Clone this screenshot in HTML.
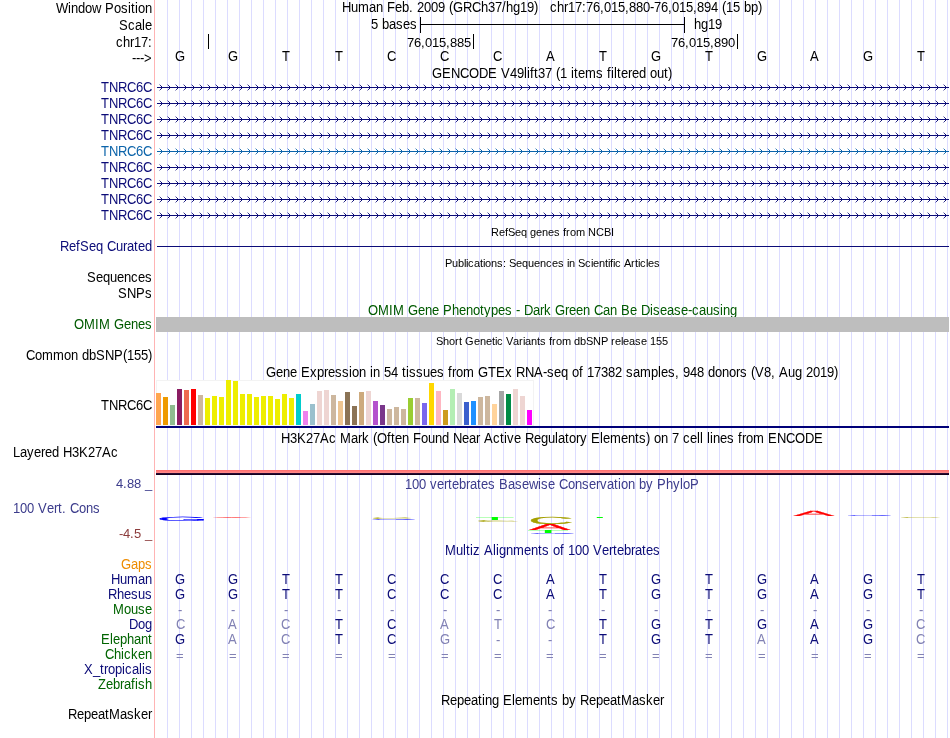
<!DOCTYPE html>
<html><head><meta charset="utf-8"><title>UCSC Genome Browser chr17:76,015,880-76,015,894</title>
<style>
html,body{margin:0;padding:0;background:#fff;}
body{width:950px;height:738px;overflow:hidden;}
svg{display:block;will-change:transform;font-family:"Liberation Sans",Arial,Helvetica,sans-serif;}
svg text{white-space:pre;}
.crisp{shape-rendering:crispEdges;}
</style></head><body>
<svg xml:space="preserve" width="950" height="738" viewBox="0 0 950 738">
<rect width="950" height="738" fill="#fff"/>
<defs>
<pattern id="chev0" patternUnits="userSpaceOnUse" x="157" y="79" width="8" height="16" shape-rendering="crispEdges"><g fill="#0c0c78"><rect x="4" y="7" width="1" height="1"/><rect x="4" y="9" width="1" height="1"/><rect x="3" y="6" width="1" height="1" opacity="0.85"/><rect x="3" y="10" width="1" height="1" opacity="0.85"/><rect x="2" y="5" width="1" height="1" opacity="0.35"/><rect x="2" y="11" width="1" height="1" opacity="0.35"/></g></pattern>
<pattern id="chev1" patternUnits="userSpaceOnUse" x="157" y="79" width="8" height="16" shape-rendering="crispEdges"><g fill="#0c64aa"><rect x="4" y="7" width="1" height="1"/><rect x="4" y="9" width="1" height="1"/><rect x="3" y="6" width="1" height="1" opacity="0.85"/><rect x="3" y="10" width="1" height="1" opacity="0.85"/><rect x="2" y="5" width="1" height="1" opacity="0.35"/><rect x="2" y="11" width="1" height="1" opacity="0.35"/></g></pattern>
</defs>
<g class="crisp">
<rect x="167" y="0" width="1" height="738" fill="#dcdcff"/>
<rect x="179" y="0" width="1" height="738" fill="#dcdcff"/>
<rect x="191" y="0" width="1" height="738" fill="#dcdcff"/>
<rect x="203" y="0" width="1" height="738" fill="#dcdcff"/>
<rect x="215" y="0" width="1" height="738" fill="#dcdcff"/>
<rect x="227" y="0" width="1" height="738" fill="#dcdcff"/>
<rect x="239" y="0" width="1" height="738" fill="#dcdcff"/>
<rect x="251" y="0" width="1" height="738" fill="#dcdcff"/>
<rect x="263" y="0" width="1" height="738" fill="#dcdcff"/>
<rect x="275" y="0" width="1" height="738" fill="#dcdcff"/>
<rect x="287" y="0" width="1" height="738" fill="#dcdcff"/>
<rect x="299" y="0" width="1" height="738" fill="#dcdcff"/>
<rect x="311" y="0" width="1" height="738" fill="#dcdcff"/>
<rect x="323" y="0" width="1" height="738" fill="#dcdcff"/>
<rect x="335" y="0" width="1" height="738" fill="#dcdcff"/>
<rect x="347" y="0" width="1" height="738" fill="#dcdcff"/>
<rect x="359" y="0" width="1" height="738" fill="#dcdcff"/>
<rect x="371" y="0" width="1" height="738" fill="#dcdcff"/>
<rect x="383" y="0" width="1" height="738" fill="#dcdcff"/>
<rect x="395" y="0" width="1" height="738" fill="#dcdcff"/>
<rect x="407" y="0" width="1" height="738" fill="#dcdcff"/>
<rect x="419" y="0" width="1" height="738" fill="#dcdcff"/>
<rect x="431" y="0" width="1" height="738" fill="#dcdcff"/>
<rect x="443" y="0" width="1" height="738" fill="#dcdcff"/>
<rect x="455" y="0" width="1" height="738" fill="#dcdcff"/>
<rect x="467" y="0" width="1" height="738" fill="#dcdcff"/>
<rect x="479" y="0" width="1" height="738" fill="#dcdcff"/>
<rect x="491" y="0" width="1" height="738" fill="#dcdcff"/>
<rect x="503" y="0" width="1" height="738" fill="#dcdcff"/>
<rect x="515" y="0" width="1" height="738" fill="#dcdcff"/>
<rect x="527" y="0" width="1" height="738" fill="#dcdcff"/>
<rect x="539" y="0" width="1" height="738" fill="#dcdcff"/>
<rect x="551" y="0" width="1" height="738" fill="#dcdcff"/>
<rect x="563" y="0" width="1" height="738" fill="#dcdcff"/>
<rect x="575" y="0" width="1" height="738" fill="#dcdcff"/>
<rect x="587" y="0" width="1" height="738" fill="#dcdcff"/>
<rect x="599" y="0" width="1" height="738" fill="#dcdcff"/>
<rect x="611" y="0" width="1" height="738" fill="#dcdcff"/>
<rect x="623" y="0" width="1" height="738" fill="#dcdcff"/>
<rect x="635" y="0" width="1" height="738" fill="#dcdcff"/>
<rect x="647" y="0" width="1" height="738" fill="#dcdcff"/>
<rect x="659" y="0" width="1" height="738" fill="#dcdcff"/>
<rect x="671" y="0" width="1" height="738" fill="#dcdcff"/>
<rect x="683" y="0" width="1" height="738" fill="#dcdcff"/>
<rect x="695" y="0" width="1" height="738" fill="#dcdcff"/>
<rect x="707" y="0" width="1" height="738" fill="#dcdcff"/>
<rect x="719" y="0" width="1" height="738" fill="#dcdcff"/>
<rect x="731" y="0" width="1" height="738" fill="#dcdcff"/>
<rect x="743" y="0" width="1" height="738" fill="#dcdcff"/>
<rect x="755" y="0" width="1" height="738" fill="#dcdcff"/>
<rect x="767" y="0" width="1" height="738" fill="#dcdcff"/>
<rect x="779" y="0" width="1" height="738" fill="#dcdcff"/>
<rect x="791" y="0" width="1" height="738" fill="#dcdcff"/>
<rect x="803" y="0" width="1" height="738" fill="#dcdcff"/>
<rect x="815" y="0" width="1" height="738" fill="#dcdcff"/>
<rect x="827" y="0" width="1" height="738" fill="#dcdcff"/>
<rect x="839" y="0" width="1" height="738" fill="#dcdcff"/>
<rect x="851" y="0" width="1" height="738" fill="#dcdcff"/>
<rect x="863" y="0" width="1" height="738" fill="#dcdcff"/>
<rect x="875" y="0" width="1" height="738" fill="#dcdcff"/>
<rect x="887" y="0" width="1" height="738" fill="#dcdcff"/>
<rect x="899" y="0" width="1" height="738" fill="#dcdcff"/>
<rect x="911" y="0" width="1" height="738" fill="#dcdcff"/>
<rect x="923" y="0" width="1" height="738" fill="#dcdcff"/>
<rect x="935" y="0" width="1" height="738" fill="#dcdcff"/>
<rect x="947" y="0" width="1" height="738" fill="#dcdcff"/>
<rect x="154" y="0" width="1" height="738" fill="#ffb4b4"/>
</g>
<text x="56 68 71 78 85 92 101 105 114 121 128 131 135 138 145" y="13" fill="#000" font-size="13" transform="matrix(1 0 0 1.07 0 -0.91)">Window Position</text>
<text x="342 351 358 369 376 383 387 395 402 409 413 417 424 431 438 445 449 453 463 472 481 488 495 502 506 513 520 527 534 538 542 546 550 557 564 568 575 582 586 593 600 604 611 618 625 629 636 643 650 654 661 668 672 679 686 693 697 704 711 718 722 726 733 740 744 751 758" y="12" fill="#000" font-size="13" transform="matrix(1 0 0 1.07 0 -0.84)">Human Feb. 2009 (GRCh37/hg19)   chr17:76,015,880-76,015,894 (15 bp)</text>
<text x="119 128 135 142 145" y="30" fill="#000" font-size="13" transform="matrix(1 0 0 1.07 0 -2.1)">Scale</text>
<text x="371 378 382 389 396 403 410" y="29" fill="#000" font-size="13" transform="matrix(1 0 0 1.07 0 -2.03)">5 bases</text>
<g class="crisp">
<rect x="420" y="24" width="265" height="1" fill="#000"/>
<rect x="420" y="17" width="1" height="16" fill="#000"/>
<rect x="684" y="17" width="1" height="16" fill="#000"/>
<rect x="208" y="34" width="1" height="15" fill="#000"/>
<rect x="473" y="34" width="1" height="15" fill="#000"/>
<rect x="737" y="34" width="1" height="15" fill="#000"/>
</g>
<text x="694 701 708 715" y="29" fill="#000" font-size="13" transform="matrix(1 0 0 1.07 0 -2.03)">hg19</text>
<text x="116 123 130 134 141 148" y="47" fill="#000" font-size="13" transform="matrix(1 0 0 1.07 0 -3.29)">chr17:</text>
<text x="407 414 421 425 432 439 446 450 457 464" y="47" fill="#000" font-size="13">76,015,885</text>
<text x="671 678 685 689 696 703 710 714 721 728" y="47" fill="#000" font-size="13">76,015,890</text>
<text x="132 136 140 144" y="63" fill="#000" font-size="13" transform="matrix(1 0 0 1.07 0 -4.41)">---&gt;</text>
<text x="175" y="61" fill="#000" font-size="13" transform="matrix(1 0 0 1.07 0 -4.27)">G</text>
<text x="228" y="61" fill="#000" font-size="13" transform="matrix(1 0 0 1.07 0 -4.27)">G</text>
<text x="282" y="61" fill="#000" font-size="13" transform="matrix(1 0 0 1.07 0 -4.27)">T</text>
<text x="335" y="61" fill="#000" font-size="13" transform="matrix(1 0 0 1.07 0 -4.27)">T</text>
<text x="387" y="61" fill="#000" font-size="13" transform="matrix(1 0 0 1.07 0 -4.27)">C</text>
<text x="440" y="61" fill="#000" font-size="13" transform="matrix(1 0 0 1.07 0 -4.27)">C</text>
<text x="493" y="61" fill="#000" font-size="13" transform="matrix(1 0 0 1.07 0 -4.27)">C</text>
<text x="546" y="61" fill="#000" font-size="13" transform="matrix(1 0 0 1.07 0 -4.27)">A</text>
<text x="599" y="61" fill="#000" font-size="13" transform="matrix(1 0 0 1.07 0 -4.27)">T</text>
<text x="651" y="61" fill="#000" font-size="13" transform="matrix(1 0 0 1.07 0 -4.27)">G</text>
<text x="705" y="61" fill="#000" font-size="13" transform="matrix(1 0 0 1.07 0 -4.27)">T</text>
<text x="757" y="61" fill="#000" font-size="13" transform="matrix(1 0 0 1.07 0 -4.27)">G</text>
<text x="810" y="61" fill="#000" font-size="13" transform="matrix(1 0 0 1.07 0 -4.27)">A</text>
<text x="863" y="61" fill="#000" font-size="13" transform="matrix(1 0 0 1.07 0 -4.27)">G</text>
<text x="917" y="61" fill="#000" font-size="13" transform="matrix(1 0 0 1.07 0 -4.27)">T</text>
<text x="432 442 451 460 469 479 488 497 501 510 517 524 527 530 534 538 545 552 556 560 567 571 574 578 585 596 603 607 611 614 617 621 628 632 639 646 650 657 664 668" y="78" fill="#000" font-size="13" transform="matrix(1 0 0 1.07 0 -5.46)">GENCODE V49lift37 (1 items filtered out)</text>
<text x="101 109 118 127 136 143" y="92" fill="#0c0c78" font-size="13" transform="matrix(1 0 0 1.07 0 -6.44)">TNRC6C</text>
<rect class="crisp" x="157" y="87" width="792" height="1" fill="#0c0c78"/>
<rect x="157" y="79" width="792" height="16" fill="url(#chev0)"/>
<text x="101 109 118 127 136 143" y="108" fill="#0c0c78" font-size="13" transform="matrix(1 0 0 1.07 0 -7.56)">TNRC6C</text>
<rect class="crisp" x="157" y="103" width="792" height="1" fill="#0c0c78"/>
<rect x="157" y="95" width="792" height="16" fill="url(#chev0)"/>
<text x="101 109 118 127 136 143" y="124" fill="#0c0c78" font-size="13" transform="matrix(1 0 0 1.07 0 -8.68)">TNRC6C</text>
<rect class="crisp" x="157" y="119" width="792" height="1" fill="#0c0c78"/>
<rect x="157" y="111" width="792" height="16" fill="url(#chev0)"/>
<text x="101 109 118 127 136 143" y="140" fill="#0c0c78" font-size="13" transform="matrix(1 0 0 1.07 0 -9.8)">TNRC6C</text>
<rect class="crisp" x="157" y="135" width="792" height="1" fill="#0c0c78"/>
<rect x="157" y="127" width="792" height="16" fill="url(#chev0)"/>
<text x="101 109 118 127 136 143" y="156" fill="#0c64aa" font-size="13" transform="matrix(1 0 0 1.07 0 -10.92)">TNRC6C</text>
<rect class="crisp" x="157" y="151" width="792" height="1" fill="#0c64aa"/>
<rect x="157" y="143" width="792" height="16" fill="url(#chev1)"/>
<text x="101 109 118 127 136 143" y="172" fill="#0c0c78" font-size="13" transform="matrix(1 0 0 1.07 0 -12.04)">TNRC6C</text>
<rect class="crisp" x="157" y="167" width="792" height="1" fill="#0c0c78"/>
<rect x="157" y="159" width="792" height="16" fill="url(#chev0)"/>
<text x="101 109 118 127 136 143" y="188" fill="#0c0c78" font-size="13" transform="matrix(1 0 0 1.07 0 -13.16)">TNRC6C</text>
<rect class="crisp" x="157" y="183" width="792" height="1" fill="#0c0c78"/>
<rect x="157" y="175" width="792" height="16" fill="url(#chev0)"/>
<text x="101 109 118 127 136 143" y="204" fill="#0c0c78" font-size="13" transform="matrix(1 0 0 1.07 0 -14.28)">TNRC6C</text>
<rect class="crisp" x="157" y="199" width="792" height="1" fill="#0c0c78"/>
<rect x="157" y="191" width="792" height="16" fill="url(#chev0)"/>
<text x="101 109 118 127 136 143" y="220" fill="#0c0c78" font-size="13" transform="matrix(1 0 0 1.07 0 -15.4)">TNRC6C</text>
<rect class="crisp" x="157" y="215" width="792" height="1" fill="#0c0c78"/>
<rect x="157" y="207" width="792" height="16" fill="url(#chev0)"/>
<text x="491 499 505 508 515 521 527 530 536 542 548 554 560 563 566 570 576 585 588 596 604 611" y="236" fill="#000" font-size="11" transform="matrix(1 0 0 1.07 0 -16.52)">RefSeq genes from NCBI</text>
<text x="60 69 76 80 89 96 103 107 116 123 127 134 138 145" y="251" fill="#0c0c78" font-size="13" transform="matrix(1 0 0 1.07 0 -17.57)">RefSeq Curated</text>
<rect class="crisp" x="157" y="246" width="792" height="1" fill="#0c0c78"/>
<text x="445 452 458 464 466 468 474 480 483 485 491 497 503 506 509 516 522 528 534 540 546 552 558 564 567 569 575 578 585 591 593 599 605 608 610 613 615 621 624 631 635 638 640 646 648 654" y="267" fill="#000" font-size="11" transform="matrix(1 0 0 1.07 0 -18.69)">Publications: Sequences in Scientific Articles</text>
<text x="87 96 103 110 117 124 131 138 145" y="282" fill="#000" font-size="13" transform="matrix(1 0 0 1.07 0 -19.74)">Sequences</text>
<text x="118 127 136 145" y="298" fill="#000" font-size="13" transform="matrix(1 0 0 1.07 0 -20.86)">SNPs</text>
<text x="368 378 389 393 404 408 418 425 432 439 443 452 459 466 473 480 484 491 498 505 512 516 520 524 533 540 544 551 555 565 569 576 583 590 594 603 610 617 621 630 637 641 650 653 660 667 674 681 688 692 699 706 713 720 723 730" y="315" fill="#005a00" font-size="13" transform="matrix(1 0 0 1.07 0 -22.05)">OMIM Gene Phenotypes - Dark Green Can Be Disease-causing</text>
<text x="74 84 95 99 110 114 124 131 138 145" y="329" fill="#005a00" font-size="13" transform="matrix(1 0 0 1.07 0 -23.03)">OMIM Genes</text>
<rect class="crisp" x="156" y="317" width="793" height="15" fill="#bebebe"/>
<text x="436 443 449 455 459 462 465 474 480 486 492 495 497 503 506 513 519 523 525 531 537 540 546 549 552 556 562 571 574 580 586 593 601 608 611 615 621 623 629 635 641 647 650 656 662" y="345" fill="#000" font-size="11" transform="matrix(1 0 0 1.07 0 -24.15)">Short Genetic Variants from dbSNP release 155</text>
<text x="26 35 42 53 64 71 78 82 89 96 105 114 123 127 134 141 148" y="360" fill="#000" font-size="13" transform="matrix(1 0 0 1.07 0 -25.2)">Common dbSNP(155)</text>
<text x="266 276 283 290 297 301 310 317 324 328 335 342 349 352 359 366 370 373 380 384 391 398 402 406 409 416 423 430 437 444 448 452 456 463 474 478 488 496 505 512 516 525 534 543 547 554 561 568 572 579 583 587 594 601 608 615 622 626 633 640 651 658 661 668 675 679 683 690 697 704 708 715 722 729 736 740 747 751 755 764 771 775 779 788 795 802 806 813 820 827 834" y="377" fill="#000" font-size="13" transform="matrix(1 0 0 1.07 0 -26.39)">Gene Expression in 54 tissues from GTEx RNA-seq of 17382 samples, 948 donors (V8, Aug 2019)</text>
<text x="101 109 118 127 136 143" y="410" fill="#000" font-size="13" transform="matrix(1 0 0 1.07 0 -28.7)">TNRC6C</text>
<g class="crisp">
<rect x="156" y="380" width="378" height="46" fill="#f3f3f3"/>
<rect x="157" y="381" width="376" height="44" fill="#fff"/>
<rect x="156" y="393" width="5" height="32" fill="#ffa54f"/>
<rect x="163" y="397" width="5" height="28" fill="#ee9a00"/>
<rect x="170" y="405" width="5" height="20" fill="#8fbc8f"/>
<rect x="177" y="389" width="5" height="36" fill="#8b1c62"/>
<rect x="184" y="390" width="5" height="35" fill="#ee6a50"/>
<rect x="191" y="389" width="5" height="36" fill="#ff0000"/>
<rect x="198" y="395" width="5" height="30" fill="#cdb79e"/>
<rect x="205" y="398" width="5" height="27" fill="#eeee00"/>
<rect x="212" y="396" width="5" height="29" fill="#eeee00"/>
<rect x="219" y="397" width="5" height="28" fill="#eeee00"/>
<rect x="226" y="380" width="5" height="45" fill="#eeee00"/>
<rect x="233" y="381" width="5" height="44" fill="#eeee00"/>
<rect x="240" y="394" width="5" height="31" fill="#eeee00"/>
<rect x="247" y="394" width="5" height="31" fill="#eeee00"/>
<rect x="254" y="397" width="5" height="28" fill="#eeee00"/>
<rect x="261" y="396" width="5" height="29" fill="#eeee00"/>
<rect x="268" y="396" width="5" height="29" fill="#eeee00"/>
<rect x="275" y="399" width="5" height="26" fill="#eeee00"/>
<rect x="282" y="394" width="5" height="31" fill="#eeee00"/>
<rect x="289" y="398" width="5" height="27" fill="#eeee00"/>
<rect x="296" y="394" width="5" height="31" fill="#00cdcd"/>
<rect x="303" y="411" width="5" height="14" fill="#ee82ee"/>
<rect x="310" y="404" width="5" height="21" fill="#9ac0cd"/>
<rect x="317" y="391" width="5" height="34" fill="#eed5d2"/>
<rect x="324" y="390" width="5" height="35" fill="#eed5d2"/>
<rect x="331" y="395" width="5" height="30" fill="#cdb79e"/>
<rect x="338" y="401" width="5" height="24" fill="#eec591"/>
<rect x="345" y="392" width="5" height="33" fill="#8b7355"/>
<rect x="352" y="406" width="5" height="19" fill="#8b7355"/>
<rect x="359" y="392" width="5" height="33" fill="#cdaa7d"/>
<rect x="366" y="391" width="5" height="34" fill="#eed5d2"/>
<rect x="373" y="401" width="5" height="24" fill="#b452cd"/>
<rect x="380" y="405" width="5" height="20" fill="#7a378b"/>
<rect x="387" y="409" width="5" height="16" fill="#cdb79e"/>
<rect x="394" y="407" width="5" height="18" fill="#cdb79e"/>
<rect x="401" y="409" width="5" height="16" fill="#cdb79e"/>
<rect x="408" y="398" width="5" height="27" fill="#9acd32"/>
<rect x="415" y="398" width="5" height="27" fill="#cdb79e"/>
<rect x="422" y="403" width="5" height="22" fill="#7a67ee"/>
<rect x="429" y="383" width="5" height="42" fill="#ffd700"/>
<rect x="436" y="391" width="5" height="34" fill="#ffb6c1"/>
<rect x="443" y="410" width="5" height="15" fill="#cd9b1d"/>
<rect x="450" y="389" width="5" height="36" fill="#b4eeb4"/>
<rect x="457" y="393" width="5" height="32" fill="#d9d9d9"/>
<rect x="464" y="402" width="5" height="23" fill="#3a5fcd"/>
<rect x="471" y="401" width="5" height="24" fill="#1e90ff"/>
<rect x="478" y="397" width="5" height="28" fill="#cdb79e"/>
<rect x="485" y="396" width="5" height="29" fill="#cdb79e"/>
<rect x="492" y="404" width="5" height="21" fill="#ffd39b"/>
<rect x="499" y="391" width="5" height="34" fill="#a6a6a6"/>
<rect x="506" y="394" width="5" height="31" fill="#008b45"/>
<rect x="513" y="389" width="5" height="36" fill="#eed5d2"/>
<rect x="520" y="396" width="5" height="29" fill="#eed5d2"/>
<rect x="527" y="410" width="5" height="15" fill="#ff00ff"/>
<rect x="156" y="426" width="793" height="2" fill="#000078"/>
</g>
<text x="281 290 297 306 313 320 329 336 340 351 358 362 369 373 377 387 391 395 402 409 413 421 428 435 442 449 453 462 469 476 480 484 493 500 504 507 514 521 525 534 541 548 555 558 565 569 576 580 587 591 600 603 610 621 628 635 639 646 650 654 661 668 672 679 683 690 697 700 703 707 710 713 720 727 734 738 742 746 753 764 768 777 786 795 805 814" y="443" fill="#000" font-size="13" transform="matrix(1 0 0 1.07 0 -31.01)">H3K27Ac Mark (Often Found Near Active Regulatory Elements) on 7 cell lines from ENCODE</text>
<text x="13 20 27 34 41 45 52 59 63 72 79 88 95 102 111" y="457" fill="#000" font-size="13" transform="matrix(1 0 0 1.07 0 -31.99)">Layered H3K27Ac</text>
<g class="crisp">
<rect x="156" y="470" width="793" height="1" fill="#ff7070"/>
<rect x="156" y="471" width="793" height="1" fill="#ff7c7c"/>
<rect x="156" y="472" width="793" height="1" fill="#ff8888"/>
<rect x="156" y="473" width="793" height="1" fill="#2a0a32"/>
<rect x="156" y="474" width="793" height="1" fill="#14001e"/>
</g>
<text x="405 412 419 426 430 437 444 448 452 459 466 470 477 481 488 495 499 508 515 522 529 538 541 548 555 559 568 575 582 589 596 600 607 614 618 621 628 635 639 646 653 657 666 673 680 683 690" y="489" fill="#3c3c8c" font-size="13" transform="matrix(1 0 0 1.07 0 -34.23)">100 vertebrates Basewise Conservation by PhyloP</text>
<text x="116 123 127 134 141 145" y="488" fill="#3c3c8c" font-size="13">4.88 _</text>
<text x="13 20 27 34 38 47 54 58 62 66 70 79 86 93" y="513" fill="#3c3c8c" font-size="13" transform="matrix(1 0 0 1.07 0 -35.91)">100 Vert. Cons</text>
<text x="119 123 130 134 141 145" y="538" fill="#8c3c3c" font-size="13">-4.5 _</text>
<text transform="translate(156.68,520.94) scale(0.6602,0.0593)" font-size="100" fill="#0000ff" text-rendering="geometricPrecision" stroke="#0000ff" stroke-width="2">G</text>
<text transform="translate(211.88,518.00) scale(0.5958,0.0145)" font-size="100" fill="#ff0000" text-rendering="geometricPrecision">A</text>
<text transform="translate(369.33,519.07) scale(0.6237,0.0268)" font-size="100" fill="#a5a000" text-rendering="geometricPrecision">C</text>
<text transform="translate(369.23,519.99) scale(0.6510,0.0141)" font-size="100" fill="#0000ff" text-rendering="geometricPrecision">G</text>
<text transform="translate(474.50,520.00) scale(0.6650,0.0436)" font-size="100" fill="#00ff00" text-rendering="geometricPrecision">T</text>
<text transform="translate(474.98,521.97) scale(0.6332,0.0282)" font-size="100" fill="#a5a000" text-rendering="geometricPrecision">C</text>
<text transform="translate(527.73,523.80) scale(0.6442,0.1031)" font-size="100" fill="#a5a000" text-rendering="geometricPrecision" stroke="#a5a000" stroke-width="1">C</text>
<text transform="translate(529.38,529.90) scale(0.6094,0.0858)" font-size="100" fill="#ff0000" text-rendering="geometricPrecision" stroke="#ff0000" stroke-width="2">A</text>
<text transform="translate(526.41,533.00) scale(0.7075,0.0436)" font-size="100" fill="#00ff00" text-rendering="geometricPrecision">T</text>
<text transform="translate(528.12,533.99) scale(0.6526,0.0141)" font-size="100" fill="#0000ff" text-rendering="geometricPrecision">G</text>
<text transform="translate(579.50,518.00) scale(0.6650,0.0160)" font-size="100" fill="#00ff00" text-rendering="geometricPrecision">T</text>
<text transform="translate(793.38,516.00) scale(0.6109,0.0770)" font-size="100" fill="#ff0000" text-rendering="geometricPrecision" stroke="#ff0000" stroke-width="1.5">A</text>
<text transform="translate(844.79,515.99) scale(0.6572,0.0141)" font-size="100" fill="#0000ff" text-rendering="geometricPrecision">G</text>
<text transform="translate(898.25,517.99) scale(0.6206,0.0141)" font-size="100" fill="#a5a000" text-rendering="geometricPrecision">C</text>
<text x="445 456 463 466 470 473 480 484 493 496 499 506 513 524 531 538 542 549 553 560 564 568 575 582 589 593 602 609 613 617 624 631 635 642 646 653" y="555" fill="#0c0c78" font-size="13" transform="matrix(1 0 0 1.07 0 -38.85)">Multiz Alignments of 100 Vertebrates</text>
<text x="121 131 138 145" y="569" fill="#ee8c00" font-size="13" transform="matrix(1 0 0 1.07 0 -39.83)">Gaps</text>
<text x="111 120 127 138 145" y="584" fill="#0c0c78" font-size="13" transform="matrix(1 0 0 1.07 0 -40.88)">Human</text>
<text x="108 117 124 131 138 145" y="599" fill="#0c0c78" font-size="13" transform="matrix(1 0 0 1.07 0 -41.93)">Rhesus</text>
<text x="113 124 131 138 145" y="614" fill="#006400" font-size="13" transform="matrix(1 0 0 1.07 0 -42.98)">Mouse</text>
<text x="129 138 145" y="629" fill="#0c0c78" font-size="13" transform="matrix(1 0 0 1.07 0 -44.03)">Dog</text>
<text x="101 110 113 120 127 134 141 148" y="644" fill="#006400" font-size="13" transform="matrix(1 0 0 1.07 0 -45.08)">Elephant</text>
<text x="105 114 121 124 131 138 145" y="659" fill="#006400" font-size="13" transform="matrix(1 0 0 1.07 0 -46.13)">Chicken</text>
<text x="84 93 100 104 108 115 122 125 132 139 142 145" y="674" fill="#0c0c78" font-size="13" transform="matrix(1 0 0 1.07 0 -47.18)">X_tropicalis</text>
<text x="98 106 113 120 124 131 135 138 145" y="689" fill="#006400" font-size="13" transform="matrix(1 0 0 1.07 0 -48.23)">Zebrafish</text>
<text x="175" y="584" fill="#0c0c78" font-size="13" transform="matrix(1 0 0 1.07 0 -40.88)">G</text>
<text x="228" y="584" fill="#0c0c78" font-size="13" transform="matrix(1 0 0 1.07 0 -40.88)">G</text>
<text x="282" y="584" fill="#0c0c78" font-size="13" transform="matrix(1 0 0 1.07 0 -40.88)">T</text>
<text x="335" y="584" fill="#0c0c78" font-size="13" transform="matrix(1 0 0 1.07 0 -40.88)">T</text>
<text x="387" y="584" fill="#0c0c78" font-size="13" transform="matrix(1 0 0 1.07 0 -40.88)">C</text>
<text x="440" y="584" fill="#0c0c78" font-size="13" transform="matrix(1 0 0 1.07 0 -40.88)">C</text>
<text x="493" y="584" fill="#0c0c78" font-size="13" transform="matrix(1 0 0 1.07 0 -40.88)">C</text>
<text x="546" y="584" fill="#0c0c78" font-size="13" transform="matrix(1 0 0 1.07 0 -40.88)">A</text>
<text x="599" y="584" fill="#0c0c78" font-size="13" transform="matrix(1 0 0 1.07 0 -40.88)">T</text>
<text x="651" y="584" fill="#0c0c78" font-size="13" transform="matrix(1 0 0 1.07 0 -40.88)">G</text>
<text x="705" y="584" fill="#0c0c78" font-size="13" transform="matrix(1 0 0 1.07 0 -40.88)">T</text>
<text x="757" y="584" fill="#0c0c78" font-size="13" transform="matrix(1 0 0 1.07 0 -40.88)">G</text>
<text x="810" y="584" fill="#0c0c78" font-size="13" transform="matrix(1 0 0 1.07 0 -40.88)">A</text>
<text x="863" y="584" fill="#0c0c78" font-size="13" transform="matrix(1 0 0 1.07 0 -40.88)">G</text>
<text x="917" y="584" fill="#0c0c78" font-size="13" transform="matrix(1 0 0 1.07 0 -40.88)">T</text>
<text x="175" y="599" fill="#0c0c78" font-size="13" transform="matrix(1 0 0 1.07 0 -41.93)">G</text>
<text x="228" y="599" fill="#0c0c78" font-size="13" transform="matrix(1 0 0 1.07 0 -41.93)">G</text>
<text x="282" y="599" fill="#0c0c78" font-size="13" transform="matrix(1 0 0 1.07 0 -41.93)">T</text>
<text x="335" y="599" fill="#0c0c78" font-size="13" transform="matrix(1 0 0 1.07 0 -41.93)">T</text>
<text x="387" y="599" fill="#0c0c78" font-size="13" transform="matrix(1 0 0 1.07 0 -41.93)">C</text>
<text x="440" y="599" fill="#0c0c78" font-size="13" transform="matrix(1 0 0 1.07 0 -41.93)">C</text>
<text x="493" y="599" fill="#0c0c78" font-size="13" transform="matrix(1 0 0 1.07 0 -41.93)">C</text>
<text x="546" y="599" fill="#0c0c78" font-size="13" transform="matrix(1 0 0 1.07 0 -41.93)">A</text>
<text x="599" y="599" fill="#0c0c78" font-size="13" transform="matrix(1 0 0 1.07 0 -41.93)">T</text>
<text x="651" y="599" fill="#0c0c78" font-size="13" transform="matrix(1 0 0 1.07 0 -41.93)">G</text>
<text x="705" y="599" fill="#0c0c78" font-size="13" transform="matrix(1 0 0 1.07 0 -41.93)">T</text>
<text x="757" y="599" fill="#0c0c78" font-size="13" transform="matrix(1 0 0 1.07 0 -41.93)">G</text>
<text x="810" y="599" fill="#0c0c78" font-size="13" transform="matrix(1 0 0 1.07 0 -41.93)">A</text>
<text x="863" y="599" fill="#0c0c78" font-size="13" transform="matrix(1 0 0 1.07 0 -41.93)">G</text>
<text x="917" y="599" fill="#0c0c78" font-size="13" transform="matrix(1 0 0 1.07 0 -41.93)">T</text>
<text x="178" y="615" fill="#8282b4" font-size="13" transform="matrix(1 0 0 1.07 0 -43.05)">-</text>
<text x="231" y="615" fill="#8282b4" font-size="13" transform="matrix(1 0 0 1.07 0 -43.05)">-</text>
<text x="284" y="615" fill="#8282b4" font-size="13" transform="matrix(1 0 0 1.07 0 -43.05)">-</text>
<text x="337" y="615" fill="#8282b4" font-size="13" transform="matrix(1 0 0 1.07 0 -43.05)">-</text>
<text x="390" y="615" fill="#8282b4" font-size="13" transform="matrix(1 0 0 1.07 0 -43.05)">-</text>
<text x="443" y="615" fill="#8282b4" font-size="13" transform="matrix(1 0 0 1.07 0 -43.05)">-</text>
<text x="496" y="615" fill="#8282b4" font-size="13" transform="matrix(1 0 0 1.07 0 -43.05)">-</text>
<text x="548" y="615" fill="#8282b4" font-size="13" transform="matrix(1 0 0 1.07 0 -43.05)">-</text>
<text x="601" y="615" fill="#8282b4" font-size="13" transform="matrix(1 0 0 1.07 0 -43.05)">-</text>
<text x="654" y="615" fill="#8282b4" font-size="13" transform="matrix(1 0 0 1.07 0 -43.05)">-</text>
<text x="707" y="615" fill="#8282b4" font-size="13" transform="matrix(1 0 0 1.07 0 -43.05)">-</text>
<text x="760" y="615" fill="#8282b4" font-size="13" transform="matrix(1 0 0 1.07 0 -43.05)">-</text>
<text x="813" y="615" fill="#8282b4" font-size="13" transform="matrix(1 0 0 1.07 0 -43.05)">-</text>
<text x="866" y="615" fill="#8282b4" font-size="13" transform="matrix(1 0 0 1.07 0 -43.05)">-</text>
<text x="919" y="615" fill="#8282b4" font-size="13" transform="matrix(1 0 0 1.07 0 -43.05)">-</text>
<text x="176" y="629" fill="#8282b4" font-size="13" transform="matrix(1 0 0 1.07 0 -44.03)">C</text>
<text x="228" y="629" fill="#8282b4" font-size="13" transform="matrix(1 0 0 1.07 0 -44.03)">A</text>
<text x="281" y="629" fill="#8282b4" font-size="13" transform="matrix(1 0 0 1.07 0 -44.03)">C</text>
<text x="335" y="629" fill="#0c0c78" font-size="13" transform="matrix(1 0 0 1.07 0 -44.03)">T</text>
<text x="387" y="629" fill="#0c0c78" font-size="13" transform="matrix(1 0 0 1.07 0 -44.03)">C</text>
<text x="440" y="629" fill="#8282b4" font-size="13" transform="matrix(1 0 0 1.07 0 -44.03)">A</text>
<text x="494" y="629" fill="#8282b4" font-size="13" transform="matrix(1 0 0 1.07 0 -44.03)">T</text>
<text x="546" y="629" fill="#8282b4" font-size="13" transform="matrix(1 0 0 1.07 0 -44.03)">C</text>
<text x="599" y="629" fill="#0c0c78" font-size="13" transform="matrix(1 0 0 1.07 0 -44.03)">T</text>
<text x="651" y="629" fill="#0c0c78" font-size="13" transform="matrix(1 0 0 1.07 0 -44.03)">G</text>
<text x="705" y="629" fill="#0c0c78" font-size="13" transform="matrix(1 0 0 1.07 0 -44.03)">T</text>
<text x="757" y="629" fill="#0c0c78" font-size="13" transform="matrix(1 0 0 1.07 0 -44.03)">G</text>
<text x="810" y="629" fill="#0c0c78" font-size="13" transform="matrix(1 0 0 1.07 0 -44.03)">A</text>
<text x="863" y="629" fill="#0c0c78" font-size="13" transform="matrix(1 0 0 1.07 0 -44.03)">G</text>
<text x="916" y="629" fill="#8282b4" font-size="13" transform="matrix(1 0 0 1.07 0 -44.03)">C</text>
<text x="175" y="644" fill="#0c0c78" font-size="13" transform="matrix(1 0 0 1.07 0 -45.08)">G</text>
<text x="228" y="644" fill="#8282b4" font-size="13" transform="matrix(1 0 0 1.07 0 -45.08)">A</text>
<text x="281" y="644" fill="#8282b4" font-size="13" transform="matrix(1 0 0 1.07 0 -45.08)">C</text>
<text x="335" y="644" fill="#0c0c78" font-size="13" transform="matrix(1 0 0 1.07 0 -45.08)">T</text>
<text x="387" y="644" fill="#0c0c78" font-size="13" transform="matrix(1 0 0 1.07 0 -45.08)">C</text>
<text x="440" y="644" fill="#8282b4" font-size="13" transform="matrix(1 0 0 1.07 0 -45.08)">G</text>
<text x="496" y="645" fill="#8282b4" font-size="13" transform="matrix(1 0 0 1.07 0 -45.15)">-</text>
<text x="548" y="645" fill="#8282b4" font-size="13" transform="matrix(1 0 0 1.07 0 -45.15)">-</text>
<text x="599" y="644" fill="#0c0c78" font-size="13" transform="matrix(1 0 0 1.07 0 -45.08)">T</text>
<text x="651" y="644" fill="#0c0c78" font-size="13" transform="matrix(1 0 0 1.07 0 -45.08)">G</text>
<text x="705" y="644" fill="#0c0c78" font-size="13" transform="matrix(1 0 0 1.07 0 -45.08)">T</text>
<text x="757" y="644" fill="#8282b4" font-size="13" transform="matrix(1 0 0 1.07 0 -45.08)">A</text>
<text x="810" y="644" fill="#0c0c78" font-size="13" transform="matrix(1 0 0 1.07 0 -45.08)">A</text>
<text x="863" y="644" fill="#0c0c78" font-size="13" transform="matrix(1 0 0 1.07 0 -45.08)">G</text>
<text x="916" y="644" fill="#8282b4" font-size="13" transform="matrix(1 0 0 1.07 0 -45.08)">C</text>
<text x="176" y="660" fill="#8282b4" font-size="13">=</text>
<text x="229" y="660" fill="#8282b4" font-size="13">=</text>
<text x="282" y="660" fill="#8282b4" font-size="13">=</text>
<text x="335" y="660" fill="#8282b4" font-size="13">=</text>
<text x="388" y="660" fill="#8282b4" font-size="13">=</text>
<text x="441" y="660" fill="#8282b4" font-size="13">=</text>
<text x="494" y="660" fill="#8282b4" font-size="13">=</text>
<text x="546" y="660" fill="#8282b4" font-size="13">=</text>
<text x="599" y="660" fill="#8282b4" font-size="13">=</text>
<text x="652" y="660" fill="#8282b4" font-size="13">=</text>
<text x="705" y="660" fill="#8282b4" font-size="13">=</text>
<text x="758" y="660" fill="#8282b4" font-size="13">=</text>
<text x="811" y="660" fill="#8282b4" font-size="13">=</text>
<text x="864" y="660" fill="#8282b4" font-size="13">=</text>
<text x="917" y="660" fill="#8282b4" font-size="13">=</text>
<text x="441 450 457 464 471 478 482 485 492 499 503 512 515 522 533 540 547 551 558 562 569 576 580 589 596 603 610 617 621 632 639 646 653 660" y="705" fill="#000" font-size="13" transform="matrix(1 0 0 1.07 0 -49.35)">Repeating Elements by RepeatMasker</text>
<text x="68 77 84 91 98 105 109 120 127 134 141 148" y="719" fill="#000" font-size="13" transform="matrix(1 0 0 1.07 0 -50.33)">RepeatMasker</text>
</svg></body></html>
